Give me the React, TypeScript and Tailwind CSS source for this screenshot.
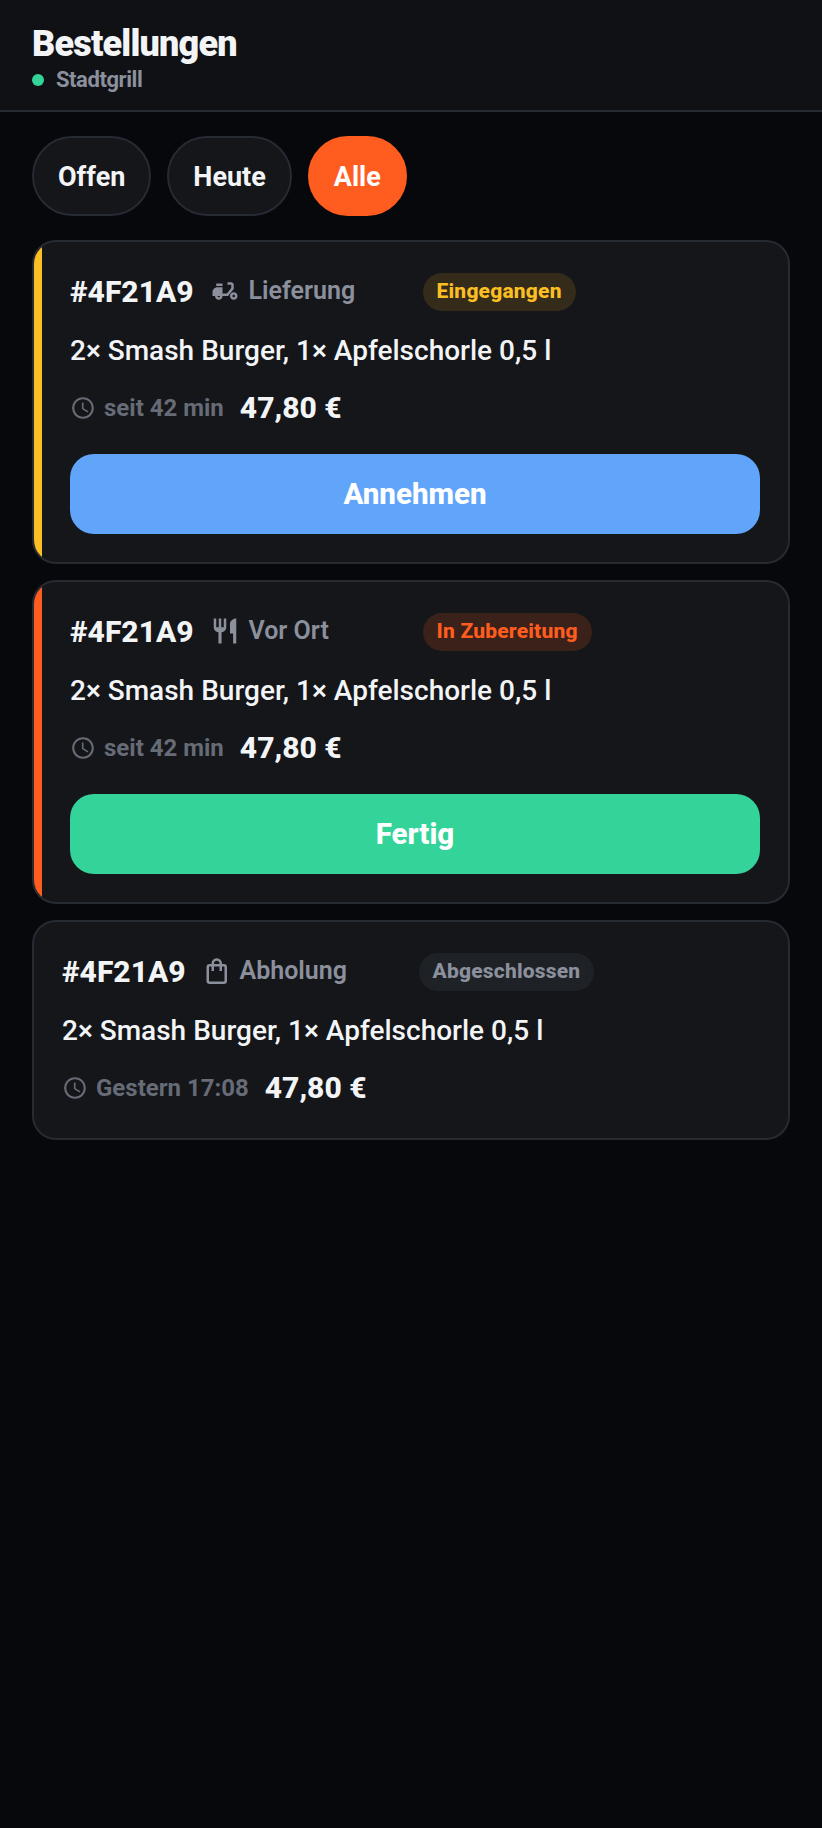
import { MdAccessTime, MdMoped, MdRestaurant } from "react-icons/md";

type Order = {
  typeIcon: React.ComponentType<{ className?: string }>;
  typeLabel: string;
  typeClass: string;
  badge: string;
  badgeClass: string;
  time: string;
  bar?: string;
  action?: { label: string; className: string };
};

function BagIcon({ className }: { className?: string }) {
  return (
    <svg viewBox="0 0 30 30" fill="none" stroke="currentColor" strokeWidth="2.5" className={className}>
      <rect x="6.75" y="9.25" width="18" height="17.5" rx="2" />
      <path d="M11.75 15V7.5a4 4 0 0 1 8 0V15" />
    </svg>
  );
}

const orders: Order[] = [
  {
    typeIcon: MdMoped,
    typeLabel: "Lieferung",
    typeClass: "ml-4 w-[213px]",
    badge: "Eingegangen",
    badgeClass: "bg-[#352b1a] text-[#fbbf24]",
    time: "seit 42 min",
    bar: "bg-[#fbbf24]",
    action: { label: "Annehmen", className: "bg-[#60a5fa]" },
  },
  {
    typeIcon: MdRestaurant,
    typeLabel: "Vor Ort",
    typeClass: "ml-4 w-[213px]",
    badge: "In Zubereitung",
    badgeClass: "bg-[#3a2119] text-[#ff5c1f]",
    time: "seit 42 min",
    bar: "bg-[#ff5c1f]",
    action: { label: "Fertig", className: "bg-[#34d399]" },
  },
  {
    typeIcon: BagIcon,
    typeLabel: "Abholung",
    typeClass: "ml-[15px] w-[218px]",
    badge: "Abgeschlossen",
    badgeClass: "bg-[#1e2227] text-[#8b909c]",
    time: "Gestern 17:08",
  },
];

function OrderCard({ order }: { order: Order }) {
  const TypeIcon = order.typeIcon;
  return (
    <article className="flex overflow-hidden rounded-[24px] border-2 border-[#262a33] bg-[#14161a]">
      {order.bar && <div className={`w-2 shrink-0 ${order.bar}`} />}
      <div className={order.action ? "flex min-w-0 flex-1 flex-col p-7" : "flex min-w-0 flex-1 flex-col px-7 pt-7 pb-[30px]"}>
        <div className="flex h-[42px] items-center">
          <span className="text-[30px] font-extrabold text-[#f3f4f6]">#4F21A9</span>
          <span className={`flex items-center gap-[9px] text-[25px] font-semibold text-[#8b909c] ${order.typeClass}`}>
            <TypeIcon className="h-[30px] w-[30px]" />
            {order.typeLabel}
          </span>
          <span className={`mt-px flex h-[38px] items-center rounded-full px-[14px] text-[21px] font-extrabold tracking-[0.2px] ${order.badgeClass}`}>
            {order.badge}
          </span>
        </div>
        <p className="mt-[19px] text-[28px] leading-[39px] font-medium text-[#f3f4f6]">
          2× Smash Burger, 1× Apfelschorle 0,5 l
        </p>
        <div className="mt-4 flex h-[42px] items-center">
          <span className="mt-[2px] flex items-center gap-2 text-[24px] font-bold text-[#666b76]">
            <MdAccessTime className="h-[26px] w-[26px]" />
            {order.time}
          </span>
          <span className="ml-4 text-[30px] font-extrabold text-[#f3f4f6]">47,80 €</span>
        </div>
        {order.action && (
          <button className={`mt-[26px] h-20 rounded-[24px] text-[29.5px] font-extrabold text-white ${order.action.className}`}>
            {order.action.label}
          </button>
        )}
      </div>
    </article>
  );
}

function Pill({ label, active }: { label: string; active?: boolean }) {
  return (
    <button
      className={
        active
          ? "h-20 rounded-full border-2 border-[#ff5c1f] bg-[#ff5c1f] px-6 pt-[2px] text-[27px] font-bold text-white"
          : "h-20 rounded-full border-2 border-[#262a33] bg-[#14161a] px-6 pt-[2px] text-[27px] font-bold text-[#f3f4f6]"
      }
    >
      {label}
    </button>
  );
}

export default function App() {
  return (
    <div className="min-h-[1828px] bg-[#07080c] font-['Roboto',sans-serif]">
      <header className="h-[112px] border-b-2 border-[#262a33] bg-[#0f1115] px-8 pt-[23px]">
        <h1 className="text-[36px] leading-[42px] font-black tracking-[-0.8px] text-[#f3f4f6]">Bestellungen</h1>
        <div className="flex items-center gap-3">
          <span className="h-3 w-3 rounded-full bg-[#34d399]" />
          <span className="text-[22px] leading-[30px] font-bold tracking-[-0.44px] text-[#8b909c]">Stadtgrill</span>
        </div>
      </header>
      <div className="flex gap-4 px-8 pt-6">
        <Pill label="Offen" />
        <Pill label="Heute" />
        <Pill label="Alle" active />
      </div>
      <div className="flex flex-col gap-4 px-8 pt-6">
        {orders.map((order) => (
          <OrderCard key={order.typeLabel} order={order} />
        ))}
      </div>
    </div>
  );
}
